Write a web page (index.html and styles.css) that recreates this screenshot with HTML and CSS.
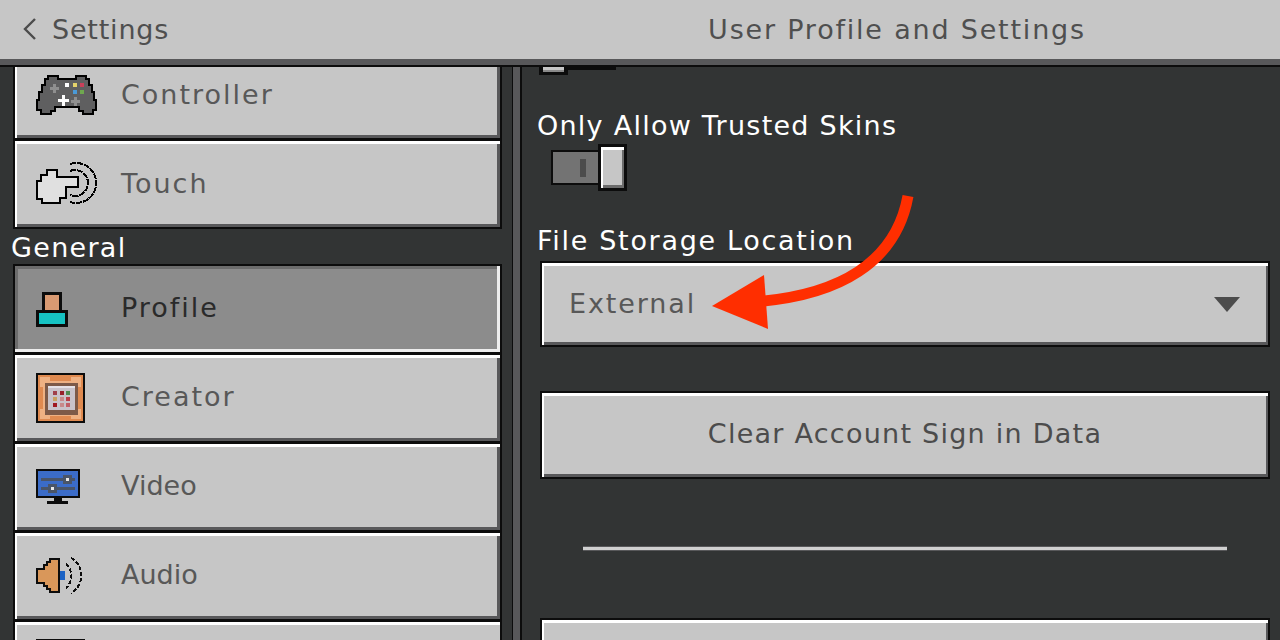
FILE: index.html
```html
<!DOCTYPE html>
<html lang="en">
<head>
    <meta charset="UTF-8">
    <meta name="viewport" content="width=device-width, initial-scale=1.0">
    <link rel="stylesheet" href="styles.css">
    <title>User Profile and Settings</title>
</head>
<body>
    <header class="topbar">
        <div class="back">
            <svg class="back-icon" width="14" height="22" viewBox="0 0 14 22"><path d="M12 1 L2 11 L12 21" fill="none" stroke="#4c4c4c" stroke-width="2.4"/></svg>
            <span>Settings</span>
        </div>
        <h1 class="title">User Profile and Settings</h1>
    </header>

    <main class="main">
        <nav class="sidebar">
            <div class="nav-list">
                <a class="nav-item" href="#">
                    <svg class="nav-icon" viewBox="36 63 64 64">
                        <path d="M48 76 H58 V79 H76 V76 H86 V79 H89 V85 H92 V92 H94 V100 H96 V110 H93 V114 H83 V111 H79 V107 H55 V111 H51 V114 H41 V110 H37 V100 H39 V92 H42 V85 H45 V79 H48 Z" fill="#5f5f60" stroke="#000" stroke-width="2.4"/>
                        <path d="M58 99 H62 V95 H65 V99 H69 V102 H65 V106 H62 V102 H58 Z" fill="#fff"/>
                        <path d="M71 100 H74 V97 H77 V100 H80 V103 H77 V106 H74 V103 H71 Z" fill="#8f8f8f"/>
                        <path d="M50 87 H53 V84 H56 V87 H59 V90 H56 V93 H53 V90 H50 Z" fill="#8f8f8f"/>
                        <rect x="65" y="83" width="4" height="4" fill="#fff"/>
                        <rect x="73" y="83" width="4" height="4" fill="#e5d36b"/>
                        <rect x="80" y="83" width="4" height="4" fill="#c9405a"/>
                        <rect x="73" y="90" width="4" height="4" fill="#4a9ad8"/>
                        <rect x="80" y="90" width="4" height="4" fill="#6fa84f"/>
                    </svg>
                    <span class="wide">Controller</span>
                </a>
                <a class="nav-item" href="#">
                    <svg class="nav-icon" viewBox="36 152 64 64">
                        <path d="M70 164 A20 20 0 1 1 70 202" fill="none" stroke="#000" stroke-width="2" stroke-dasharray="6 1"/>
                        <path d="M70 171 A13 13 0 1 1 70 195" fill="none" stroke="#000" stroke-width="2" stroke-dasharray="6 1"/>
                        <path d="M47 170 H57 V177 H78 V187 H66 V198 H60 V203 H42 V199 H37 V181 H41 V175 H47 Z" fill="#e0e0e0" stroke="#000" stroke-width="2"/>
                    </svg>
                    <span class="wide">Touch</span>
                </a>

                <h2 class="nav-group">General</h2>

                <a class="nav-item is-active" href="#">
                    <svg class="nav-icon" viewBox="36 276 64 64">
                        <rect x="43.5" y="292.5" width="17" height="18" fill="#d99a72" stroke="#0c0c0c" stroke-width="3"/>
                        <rect x="37.5" y="310.5" width="29" height="14" fill="#16c2c2" stroke="#0c0c0c" stroke-width="3"/>
                    </svg>
                    <span class="wide lift">Profile</span>
                </a>
                <a class="nav-item" href="#">
                    <svg class="nav-icon" viewBox="36 365 64 64">
                        <rect x="37" y="373" width="47" height="48" fill="#df8a50" stroke="#0c0c0c" stroke-width="2.5"/>
                        <path d="M40 376 H50 V380 H71 V376 H81 V386 H78 V408 H81 V418 H71 V415 H50 V418 H40 V408 H43 V386 H40 Z" fill="#eeb183"/>
                        <rect x="45" y="382" width="33" height="32" fill="#7d5a48"/>
                        <rect x="48" y="385" width="27" height="24" fill="#c9c3c9"/>
                        <rect x="48" y="385" width="27" height="2" fill="#e6e2e6"/>
                        <rect x="53" y="390" width="4" height="4" fill="#a0404a"/>
                        <rect x="60" y="390" width="4" height="4" fill="#98202a"/>
                        <rect x="66" y="390" width="4" height="4" fill="#4f8a4f"/>
                        <rect x="53" y="396" width="4" height="4" fill="#c8a060"/>
                        <rect x="60" y="396" width="4" height="4" fill="#c88a8a"/>
                        <rect x="66" y="396" width="4" height="4" fill="#b84048"/>
                        <rect x="53" y="402" width="4" height="4" fill="#a01820"/>
                        <rect x="60" y="402" width="4" height="4" fill="#c88a8a"/>
                        <rect x="66" y="402" width="4" height="4" fill="#c06068"/>
                    </svg>
                    <span class="wide lift">Creator</span>
                </a>
                <a class="nav-item" href="#">
                    <svg class="nav-icon" viewBox="36 454 64 64">
                        <rect x="37" y="469" width="42" height="27" fill="#3b6cc8" stroke="#0c0c0c" stroke-width="2.5"/>
                        <rect x="54" y="497" width="8" height="5" fill="#0c0c0c"/>
                        <rect x="47" y="500" width="21" height="3" fill="#0c0c0c"/>
                        <rect x="41" y="477" width="34" height="3" fill="#4a5568"/>
                        <rect x="41" y="486" width="34" height="3" fill="#4a5568"/>
                        <rect x="63" y="474" width="9" height="9" fill="#4a5568"/>
                        <rect x="66" y="477" width="3" height="3" fill="#e8e8e8"/>
                        <rect x="48" y="483" width="9" height="9" fill="#4a5568"/>
                        <rect x="51" y="486" width="3" height="3" fill="#e8e8e8"/>
                    </svg>
                    <span class="lift">Video</span>
                </a>
                <a class="nav-item" href="#">
                    <svg class="nav-icon" viewBox="36 543 64 64">
                        <path d="M50 558 H59 V591 H50 V588 H47 V585 H44 V582 H37 V568 H44 V564 H47 V561 H50 Z" fill="#d9975a" stroke="#0c0c0c" stroke-width="2.4"/>
                        <rect x="60" y="570" width="5" height="9" fill="#1a62c4"/>
                        <path d="M66 563 A16 16 0 0 1 66 587" fill="none" stroke="#0c0c0c" stroke-width="2" stroke-dasharray="4 2"/>
                        <path d="M71 557 A20 20 0 0 1 71 592" fill="none" stroke="#0c0c0c" stroke-width="2" stroke-dasharray="4 2"/>
                    </svg>
                    <span class="lift">Audio</span>
                </a>
                <a class="nav-item nav-item-cut" href="#">
                    <div class="cut-icon"></div>
                </a>
            </div>
        </nav>

        <section class="panel">
            <div class="slider-stub">
                <div class="slider-thumb"></div>
                <div class="slider-line"></div>
            </div>

            <label class="field-label field-label-first">Only Allow Trusted Skins</label>
            <div class="toggle">
                <div class="toggle-track"><div class="toggle-mark"></div></div>
                <div class="toggle-thumb"></div>
            </div>

            <label class="field-label field-label-second">File Storage Location</label>
            <div class="mc-button dropdown">
                <span>External</span>
                <svg width="26" height="15" viewBox="0 0 26 15"><path d="M0 0 H26 L13 15 Z" fill="#4c4c4c"/></svg>
            </div>

            <div class="mc-button action"><span>Clear Account Sign in Data</span></div>

            <div class="divider"></div>

            <div class="mc-button next"></div>

            <svg class="arrow" width="240" height="150" viewBox="700 190 240 150">
                <path d="M908 196 C 896 262 840 296 752 302" fill="none" stroke="#ff2e00" stroke-width="11"/>
                <path d="M712 306 L764 275 L768 329 Z" fill="#ff2e00"/>
            </svg>
        </section>
    </main>
</body>
</html>
```

FILE: styles.css
```css
body {
    margin: 0;
    height: 640px;
    overflow: hidden;
    display: flex;
    flex-direction: column;
    background-color: #323434;
    font-family: "DejaVu Sans", sans-serif;
    font-size: 27px;
    color: #585858;
}

.topbar {
    height: 59px;
    flex: none;
    display: flex;
    align-items: center;
    background-color: #c6c6c6;
    border-bottom: 6px solid #58585a;
    box-shadow: 0 2px 0 #0c0c0c;
    position: relative;
    z-index: 1;
    color: #4f4f4f;
}

.back {
    width: 522px;
    flex: none;
    display: flex;
    align-items: center;
    gap: 15px;
    padding-left: 23px;
    box-sizing: border-box;
    letter-spacing: 0.8px;
}

.back-icon {
    margin-top: -1px;
}

.title {
    flex: 1;
    margin: 0;
    padding-right: 8px;
    font-size: 27px;
    font-weight: normal;
    text-align: center;
    letter-spacing: 1.8px;
}

.main {
    flex: 1;
    min-height: 0;
    margin-top: 2px;
    display: flex;
    background-color: #58585a;
}

.sidebar {
    width: 512px;
    flex: none;
    overflow: hidden;
    border-right: 1px solid #0c0c0c;
    background-color: #323434;
}

.nav-list {
    margin: -17px 10px 0 13px;
}

.nav-group {
    height: 35px;
    margin: 1px 0 0 -2px;
    font-size: 27px;
    font-weight: normal;
    line-height: 38px;
    letter-spacing: 1.3px;
    color: #fff;
}

.nav-item {
    height: 90px;
    margin-bottom: -1px;
    box-sizing: border-box;
    display: flex;
    align-items: center;
    gap: 21px;
    padding-left: 21px;
    border: 2px solid #0c0c0c;
    background-color: #c6c6c6;
    box-shadow: inset 2px 3px 0 #fff, inset -3px -3px 0 #58585a;
    color: #585858;
    text-decoration: none;
}

.nav-item span {
    padding-bottom: 1px;
}

.nav-item .wide {
    letter-spacing: 2px;
}

.nav-item .lift {
    padding-bottom: 3px;
}

.nav-item.is-active {
    background-color: #8c8c8c;
    box-shadow: inset -3px -3px 0 #ededed, inset 3px 3px 0 #6c6c6c;
    color: #2a2a2a;
}

.nav-item-cut {
    height: 21px;
    margin-bottom: 0;
    align-items: flex-start;
    border-bottom: 0;
    box-shadow: inset 2px 3px 0 #fff;
}

.cut-icon {
    width: 49px;
    height: 2px;
    margin-top: 17px;
    background-color: #0c0c0c;
}

.nav-icon {
    width: 64px;
    height: 64px;
    flex: none;
    shape-rendering: crispEdges;
}

.panel {
    flex: 1;
    min-width: 0;
    display: flex;
    flex-direction: column;
    margin-left: 7px;
    padding: 0 10px 0 15px;
    background-color: #323434;
    border-left: 2px solid #0c0c0c;
}

.slider-stub {
    height: 8px;
    flex: none;
    display: flex;
    margin-left: 2px;
}

.slider-thumb {
    width: 21px;
    height: 5px;
    border: solid #0c0c0c;
    border-width: 0 4px 3px;
    background-color: #c6c6c6;
    box-shadow: inset 0 -2px 0 #8a8a8a;
}

.slider-line {
    width: 48px;
    height: 3px;
    background-color: #0c0c0c;
}

.field-label {
    height: 30px;
    flex: none;
    line-height: 30px;
    color: #fff;
}

.field-label-first {
    margin-top: 36px;
    letter-spacing: 1.25px;
}

.field-label-second {
    margin-top: 35px;
    letter-spacing: 1.7px;
}

.toggle {
    height: 47px;
    flex: none;
    margin: 3px 0 0 14px;
    display: flex;
    align-items: center;
}

.toggle-track {
    width: 47px;
    height: 35px;
    box-sizing: border-box;
    display: flex;
    align-items: center;
    justify-content: flex-end;
    padding-right: 12px;
    border: solid #0c0c0c;
    border-width: 2px 0 2px 2px;
    background-color: #737373;
}

.toggle-mark {
    width: 6px;
    height: 18px;
    background-color: #4c4c4c;
}

.toggle-thumb {
    width: 29px;
    height: 47px;
    box-sizing: border-box;
    border: 3px solid #0c0c0c;
    background-color: #c6c6c6;
    box-shadow: inset 2px 3px 0 #fff, inset -2px -3px 0 #6c6c6c;
}

.mc-button {
    flex: none;
    box-sizing: border-box;
    margin: 0 0 0 3px;
    border: 2px solid #0c0c0c;
    background-color: #c6c6c6;
    box-shadow: inset 2px 3px 0 #fff, inset -2px -3px 0 #58585a;
    color: #585858;
}

.dropdown {
    height: 86px;
    margin-top: 5px;
    display: flex;
    align-items: center;
    justify-content: space-between;
    padding: 0 28px 0 27px;
}

.dropdown span {
    padding-bottom: 2px;
    letter-spacing: 1.9px;
}

.action {
    height: 88px;
    margin-top: 44px;
    display: flex;
    align-items: center;
    justify-content: center;
    color: #4c4c4c;
    letter-spacing: 1.25px;
}

.action span {
    padding-bottom: 4px;
}

.next {
    height: 22px;
    margin-top: 67px;
    border-bottom: 0;
    box-shadow: inset 2px 3px 0 #fff, inset -2px 0 0 #58585a;
}

.divider {
    height: 5px;
    flex: none;
    margin: 67px 43px 0 46px;
    box-sizing: border-box;
    border-top: 1px solid #58585a;
    border-bottom: 1px solid #58585a;
    background-color: #d0d0d0;
}

/* red annotation arrow over the dropdown */
.arrow {
    position: absolute;
    left: 700px;
    top: 190px;
}
```
